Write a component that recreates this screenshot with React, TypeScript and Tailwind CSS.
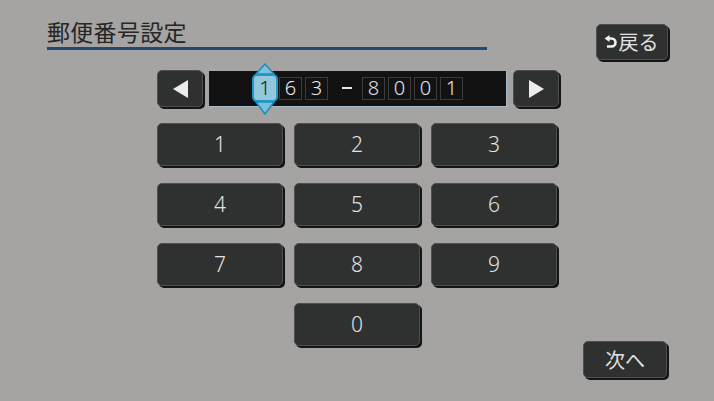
import React from "react";

const keys = ["1", "2", "3", "4", "5", "6", "7", "8", "9"];
const digits = ["6", "3", "-", "8", "0", "0", "1"];

const btn =
  "bg-[#2f3130] border border-[#4d4f4e] rounded-[5px] shadow-[2px_2px_0_#141514] text-[#e2e2e2] flex items-center justify-center";

function KeyButton({ label }: { label: string }) {
  return <div className={`${btn} h-[43px] text-[21px] font-light`}>{label}</div>;
}

function Cursor() {
  return (
    <div className="relative w-[26px] h-[28px] mx-[1px]">
      <svg
        className="absolute left-[3px] -top-[11px]"
        width="20"
        height="12"
        viewBox="0 0 20 12"
      >
        <polygon points="10,1 19,11 1,11" fill="#79c2dc" stroke="#1c8cc0" strokeWidth="1.5" />
      </svg>
      <svg
        className="absolute left-[3px] -bottom-[13px]"
        width="20"
        height="14"
        viewBox="0 0 20 14"
      >
        <polygon points="1,1 19,1 10,13" fill="#79c2dc" stroke="#1c8cc0" strokeWidth="1.5" />
      </svg>
      <div className="absolute inset-0 rounded-[5px] border-2 border-[#1f96cc] bg-[#93c7da] flex items-center justify-center text-[20px] font-light text-[#1a1a1a]">
        1
      </div>
    </div>
  );
}

export default function App() {
  return (
    <div
      className="w-[714px] h-[401px] bg-[#a5a4a2] flex flex-col overflow-hidden"
      style={{ fontFamily: '"Noto Sans", "Noto Sans CJK JP", sans-serif' }}
    >
      {/* header */}
      <div className="flex items-start justify-between pl-[47px] pr-[46px] pt-[17px]">
        <div className="w-[440px] border-b-[3px] border-[#1e4b74] pb-[1px]">
          <div
            className="text-[23px] leading-[29px] text-[#262626] tracking-[0.3px]"
            style={{ fontFamily: '"Noto Sans CJK JP", sans-serif' }}
          >
            郵便番号設定
          </div>
        </div>
        <div className={`${btn} mt-[7px] w-[72px] h-[36px] gap-[2px] pr-[2px]`}>
          <svg width="13" height="15" viewBox="0 0 13 15">
            <path
              d="M4 3.5 H7.5 A4 4 0 0 1 7.5 11.5 H3"
              fill="none"
              stroke="#f0f0f0"
              strokeWidth="2.6"
            />
            <polygon points="0.5,3.5 5.5,0 5.5,7" fill="#f0f0f0" />
          </svg>
          <span
            className="text-[20px] leading-none"
            style={{ fontFamily: '"Noto Sans CJK JP", sans-serif' }}
          >
            戻る
          </span>
        </div>
      </div>

      {/* code input row */}
      <div className="flex items-center ml-[157px] mt-[10px] gap-[5px]">
        <div className={`${btn} w-[46px] h-[37px]`}>
          <svg width="15" height="18" viewBox="0 0 15 18">
            <polygon points="0,9 15,0 15,18" fill="#ececec" />
          </svg>
        </div>
        <div className="w-[298px] h-[36px] bg-[#121212] border-r border-b border-[#a9bccb] flex items-center justify-center ml-[1px] pl-[2px]">
          <Cursor />
          {digits.map((d, i) =>
            d === "-" ? (
              <div key={i} className="w-[31px] flex justify-center">
                <div className="w-[10px] h-[2px] bg-[#e6e6e6]" />
              </div>
            ) : (
              <div
                key={i}
                className="w-[23px] h-[23px] mr-[3px] border border-[#3b3b3b] flex items-center justify-center text-[20px] font-light text-[#e6e6e6]"
              >
                {d}
              </div>
            )
          )}
        </div>
        <div className={`${btn} ml-[1px] w-[46px] h-[37px]`}>
          <svg width="15" height="18" viewBox="0 0 15 18">
            <polygon points="15,9 0,0 0,18" fill="#ececec" />
          </svg>
        </div>
      </div>

      {/* keypad + next */}
      <div className="flex items-start mt-[16px]">
        <div className="ml-[157px] w-[400px] grid grid-cols-3 gap-x-[11px] gap-y-[17px]">
          {keys.map((k) => (
            <KeyButton key={k} label={k} />
          ))}
          <div />
          <KeyButton label="0" />
        </div>
        <div
          className={`${btn} ml-auto mr-[47px] mt-[218px] w-[84px] h-[37px] text-[20px]`}
          style={{ fontFamily: '"Noto Sans CJK JP", sans-serif' }}
        >
          次へ
        </div>
      </div>
    </div>
  );
}
